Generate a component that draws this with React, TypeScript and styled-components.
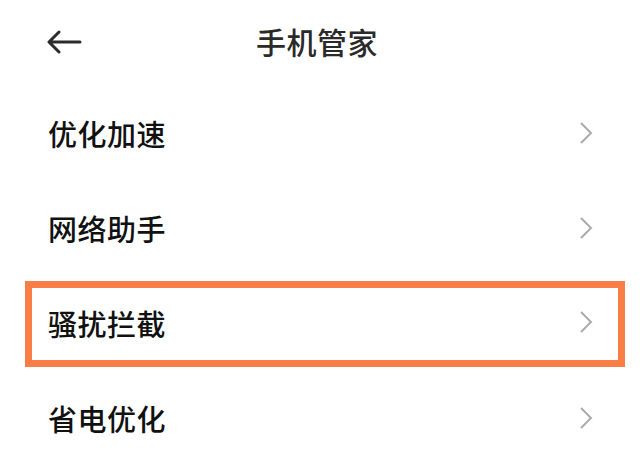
import styled, { createGlobalStyle } from 'styled-components';

const GlobalStyle = createGlobalStyle`
    html, body {
        margin: 0;
        padding: 0;
        background: #ffffff;
    }
    body {
        font-family: "Noto Sans CJK SC", "Noto Sans", sans-serif;
    }
`;

const items = [
    { label: '优化加速' },
    { label: '网络助手' },
    { label: '骚扰拦截', highlighted: true },
    { label: '省电优化' },
];

function BackArrow() {
    return (
        <svg width="36" height="24" viewBox="0 0 36 24" fill="none">
            <path
                d="M34 12H4M13 2L3 12l10 10"
                stroke="#2b2b2b"
                strokeWidth="3"
                strokeLinecap="round"
                strokeLinejoin="round"
            />
        </svg>
    );
}

function Chevron() {
    return (
        <svg width="14" height="22" viewBox="0 0 14 22" fill="none">
            <path d="M2 1l10 10L2 21" stroke="#ababab" strokeWidth="2" />
        </svg>
    );
}

export default function App() {
    return (
        <>
            <GlobalStyle />
            <Page>
                <Header>
                    <BackButton>
                        <BackArrow />
                    </BackButton>
                    <Title>手机管家</Title>
                </Header>
                <List>
                    {items.map((item) => (
                        <Row key={item.label} $highlighted={!!item.highlighted}>
                            <Label>{item.label}</Label>
                            <Chevron />
                        </Row>
                    ))}
                </List>
            </Page>
        </>
    );
}

interface RowProps {
    $highlighted: boolean;
}

const Page = styled.div`
    width: 640px;
    height: 459px;
    background: #fff;
    overflow: hidden;
`;

const Header = styled.div`
    position: relative;
    height: 85px;
    display: flex;
    align-items: center;
    justify-content: center;
    padding-bottom: 3px;
    box-sizing: border-box;
`;

const BackButton = styled.div`
    position: absolute;
    left: 46px;
    top: 30px;
    display: flex;
`;

const Title = styled.h1`
    margin: 0;
    font-size: 30px;
    font-weight: 500;
    color: #2a2a2a;
    letter-spacing: 0.5px;
    transform: translateX(-3px);
`;

const List = styled.div`
    display: flex;
    flex-direction: column;
`;

const Row = styled.div<RowProps>`
    position: relative;
    height: 95px;
    display: flex;
    align-items: center;
    justify-content: space-between;
    padding: 0 47px 0 48px;

    svg {
        transform: translateY(${(p) => (p.$highlighted ? '-1px' : '0')});
    }

    ${(p) =>
        p.$highlighted &&
        `
        &::after {
            content: '';
            position: absolute;
            left: 25px;
            right: 15px;
            top: 6px;
            bottom: 3px;
            border: 7.5px solid #f97e46;
            pointer-events: none;
        }
    `}
`;

const Label = styled.span`
    font-size: 29px;
    font-weight: 500;
    color: #111;
    letter-spacing: 0.5px;
`;
